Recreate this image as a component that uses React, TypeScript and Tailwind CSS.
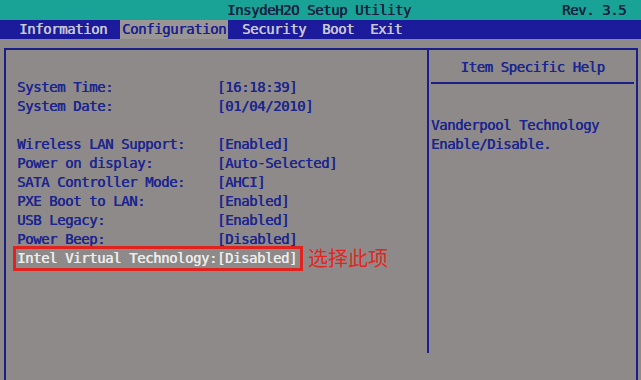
import React from "react";

const mono = "font-['DejaVu_Sans_Mono',monospace] text-[14px] tracking-[-0.43px] [text-shadow:0.4px_0_0_currentColor]";

const rows: ([string, string] | null)[] = [
  ["System Time:", "[16:18:39]"],
  ["System Date:", "[01/04/2010]"],
  null,
  ["Wireless LAN Support:", "[Enabled]"],
  ["Power on display:", "[Auto-Selected]"],
  ["SATA Controller Mode:", "[AHCI]"],
  ["PXE Boot to LAN:", "[Enabled]"],
  ["USB Legacy:", "[Enabled]"],
  ["Power Beep:", "[Disabled]"],
];

export default function App() {
  return (
    <div className={`w-[641px] h-[380px] overflow-hidden bg-[#8f8a8a] flex flex-col ${mono}`}>
      <div className="h-[20px] bg-[#19a396] relative flex items-center justify-center text-[#15203f]">
        <span className="ml-[-3px]">InsydeH2O Setup Utility</span>
        <span className="absolute right-[15px] top-0 h-full flex items-center">Rev. 3.5</span>
      </div>
      <div className="h-[19px] bg-[#1b1b9b] flex items-center text-[#c9c8d6] pl-[19px]">
        <span>Information</span>
        <span className="ml-[13px] px-[2px] bg-[#9b9696] text-[#1b2090] h-full flex items-center">Configuration</span>
        <span className="ml-[14px]">Security</span>
        <span className="ml-[16px]">Boot</span>
        <span className="ml-[16px]">Exit</span>
      </div>
      <div className="mt-[9px] ml-[4px] mr-[3px] flex-1 border-t-2 border-l-2 border-r-2 border-[#1c1e88] flex">
        <div className="w-[423px] h-[303px] border-r-2 border-[#1c1e88] pl-[11px] pt-[28px] text-[#1a2590] leading-[19px]">
          {rows.map((r, i) =>
            r ? (
              <div key={i} className="flex h-[19px]">
                <span className="w-[200px] whitespace-pre">{r[0]}</span>
                <span>{r[1]}</span>
              </div>
            ) : (
              <div key={i} className="h-[19px]" />
            )
          )}
          <div className="relative flex h-[19px] items-center">
            <span className="text-[#ececec] whitespace-pre">Intel Virtual Technology:[Disabled]</span>
            <div className="absolute left-[-4px] top-[-3px] w-[290px] h-[25px] border-[3px] border-[#e0231f]" />
            <span className="absolute left-[291px] top-[-3px] text-[20px] leading-[24px] tracking-normal [text-shadow:none] text-[#e3251f] font-['Noto_Sans_CJK_SC',sans-serif]">
              选择此项
            </span>
          </div>
        </div>
        <div className="flex-1 flex flex-col text-[#1a2590] leading-[19px]">
          <div className="mt-[8px] h-[19px] text-center">Item Specific Help</div>
          <div className="mt-[5px] mx-[2px] h-[1.5px] bg-[#1c1e88]" />
          <div className="mt-[32px] pl-[2px]">Vanderpool Technology</div>
          <div className="pl-[2px]">Enable/Disable.</div>
        </div>
      </div>
    </div>
  );
}
